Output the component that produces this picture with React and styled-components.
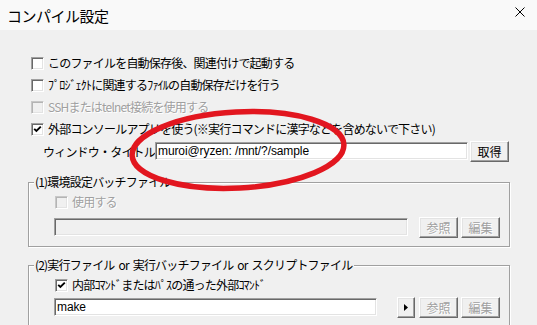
import React from "react";
import styled, { createGlobalStyle } from "styled-components";

const GlobalStyle = createGlobalStyle`
  html, body {
    margin: 0;
    padding: 0;
    background: #f0f0f0;
  }
  body {
    font-family: "Noto Sans CJK JP", "Noto Sans", sans-serif;
    font-size: 12px;
    color: #000;
  }
`;

const Window = styled.div`
  position: relative;
  width: 537px;
  height: 325px;
  overflow: hidden;
  background: #f0f0f0;
`;

const TitleBar = styled.div`
  height: 30px;
  background: #f9f9f9;
  display: flex;
  align-items: center;
  justify-content: space-between;
`;

const Title = styled.div`
  padding-left: 7px;
  font-size: 15px;
  letter-spacing: -0.5px;
`;

const CloseButton = styled.div`
  width: 10px;
  height: 10px;
  margin: -6px 12px 0 0;
  display: flex;
`;

const Body = styled.div`
  padding: 22px 0 0 31px;
  letter-spacing: -0.8px;
`;

const Row = styled.div`
  height: 22px;
  display: flex;
  align-items: center;
  padding-left: ${(p) => p.$indent || 0}px;
  margin-top: ${(p) => p.$top || 0}px;
`;

const Box = styled.span`
  box-sizing: border-box;
  width: 13px;
  height: 13px;
  margin-right: 4px;
  flex: none;
  display: flex;
  align-items: center;
  justify-content: center;
  border: 1px solid;
  border-color: ${(p) => (p.$disabled ? "#c8c8c8 #fff #fff #c8c8c8" : "#a0a0a0 #fff #fff #a0a0a0")};
  box-shadow: inset 1px 1px 0 ${(p) => (p.$disabled ? "#b4b4b4" : "#696969")},
    inset -1px -1px 0 #e3e3e3;
  background: ${(p) => (p.$disabled ? "#f0f0f0" : "#fff")};
`;

const Label = styled.span`
  color: ${(p) => (p.$disabled ? "#a0a0a0" : "#000")};
  text-shadow: ${(p) => (p.$disabled ? "1px 1px 0 #fff" : "none")};
  white-space: nowrap;
  line-height: 14px;
`;

const FieldLabel = styled.span`
  width: 112px;
  margin-left: 12px;
  white-space: nowrap;
`;

const TextBox = styled.div`
  box-sizing: border-box;
  width: ${(p) => p.$w}px;
  height: 18px;
  padding: 0 2px;
  display: flex;
  align-items: center;
  border: 1px solid;
  border-color: #a0a0a0 #fff #fff #a0a0a0;
  box-shadow: inset 1px 1px 0 #696969, inset -1px -1px 0 #e3e3e3;
  background: ${(p) => (p.$disabled ? "#f0f0f0" : "#fff")};
  font-family: "Liberation Sans", "Noto Sans CJK JP", sans-serif;
  letter-spacing: -0.1px;
  white-space: nowrap;
`;

const Button = styled.div`
  box-sizing: border-box;
  width: ${(p) => p.$w || 39}px;
  height: 21px;
  margin-left: ${(p) => p.$gap || 0}px;
  display: flex;
  align-items: center;
  justify-content: center;
  border: 1px solid;
  border-color: #fff #696969 #696969 #fff;
  box-shadow: inset -1px -1px 0 #a0a0a0, inset 1px 1px 0 #e3e3e3;
  background: #f0f0f0;
  color: ${(p) => (p.$disabled ? "#a0a0a0" : "#000")};
  text-shadow: ${(p) => (p.$disabled ? "1px 1px 0 #fff" : "none")};
  letter-spacing: 0;
  flex: none;
`;

const Group = styled.div`
  box-sizing: border-box;
  width: 482px;
  height: ${(p) => p.$h}px;
  margin: ${(p) => p.$top}px 0 0 -3px;
  padding: 0 9px 0 25px;
  border: 1px solid #a0a0a0;
  box-shadow: inset 1px 1px 0 #fff, 1px 1px 0 #fff;
`;

const Legend = styled.div`
  width: fit-content;
  margin: -8px 0 0 -20px;
  padding: 0 2px 0 1px;
  line-height: 14px;
  background: #f0f0f0;
  white-space: nowrap;
  word-spacing: 2px;
`;

const Annotation = styled.svg`
  position: absolute;
  left: 0;
  top: 0;
  pointer-events: none;
`;

const Check = () => (
  <svg width="9" height="9" viewBox="0 0 9 9">
    <path d="M1.2 3.8 L3.4 6 L7.8 1.6" fill="none" stroke="#000" strokeWidth="1.9" />
  </svg>
);

const CheckItem = ({ checked, disabled, children, indent, top }) => (
  <Row $indent={indent} $top={top}>
    <Box $disabled={disabled}>{checked && <Check />}</Box>
    <Label $disabled={disabled}>{children}</Label>
  </Row>
);

export default function App() {
  return (
    <>
      <GlobalStyle />
      <Window>
        <TitleBar>
          <Title>コンパイル設定</Title>
          <CloseButton>
            <svg width="10" height="10" viewBox="0 0 10 10">
              <path d="M0.5 0.5 L9.5 9.5 M9.5 0.5 L0.5 9.5" stroke="#000" strokeWidth="1" />
            </svg>
          </CloseButton>
        </TitleBar>

        <Body>
          <CheckItem>このファイルを自動保存後、関連付けで起動する</CheckItem>
          <CheckItem>ﾌﾟﾛｼﾞｪｸﾄに関連するﾌｧｲﾙの自動保存だけを行う</CheckItem>
          <CheckItem disabled>SSHまたはtelnet接続を使用する</CheckItem>
          <CheckItem checked>外部コンソールアプリを使う(※実行コマンドに漢字などを含めないで下さい)</CheckItem>
          <Row>
            <FieldLabel>ウィンドウ・タイトル</FieldLabel>
            <TextBox $w={313}>muroi@ryzen: /mnt/?/sample</TextBox>
            <Button $gap={2}>取得</Button>
          </Row>

          <Group $top={20} $h={65}>
            <Legend>(1)環境設定バッチファイル</Legend>
            <CheckItem disabled indent={1} top={2}>使用する</CheckItem>
            <Row $top={3}>
              <TextBox $w={355} $disabled />
              <Button $gap={11} $disabled>参照</Button>
              <Button $gap={3} $disabled>編集</Button>
            </Row>
          </Group>

          <Group $top={18} $h={90}>
            <Legend>(2)実行ファイル or 実行バッチファイル or スクリプトファイル</Legend>
            <CheckItem checked indent={1} top={2}>内部ｺﾏﾝﾄﾞまたはﾊﾟｽの通った外部ｺﾏﾝﾄﾞ</CheckItem>
            <Row>
              <TextBox $w={324}>make</TextBox>
              <Button $w={18} $gap={20}>
                <svg width="4" height="7" viewBox="0 0 4 7">
                  <path d="M0 0 L4 3.5 L0 7 Z" fill="#000" />
                </svg>
              </Button>
              <Button $gap={4} $disabled>参照</Button>
              <Button $gap={3} $disabled>編集</Button>
            </Row>
          </Group>
        </Body>

        <Annotation width="537" height="325" viewBox="0 0 537 325">
          <ellipse
            cx="238"
            cy="150"
            rx="106"
            ry="38"
            transform="rotate(-3 238 150)"
            fill="none"
            stroke="#e2161f"
            strokeWidth="5.5"
          />
        </Annotation>
      </Window>
    </>
  );
}
